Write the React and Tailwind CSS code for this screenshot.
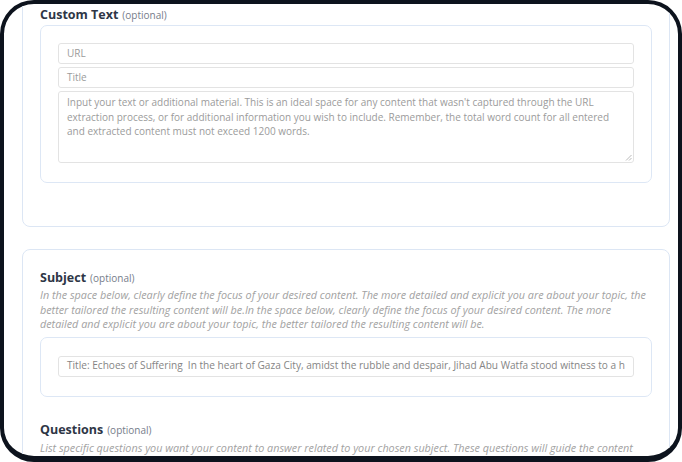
import React from "react";

const font = { fontFamily: '"Open Sans", "Noto Sans", Arial, sans-serif' };

function Heading({ title }) {
  return (
    <div className="flex items-baseline gap-[4px] leading-[16px]">
      <span className="text-[12.5px] font-bold text-[#2e3646]">{title}</span>
      <span className="text-[10px] text-[#767d8a]">(optional)</span>
    </div>
  );
}

function Field({ children, className = "" }) {
  return (
    <div
      className={
        "rounded-[3px] border border-[#e3e3e3] bg-white px-[8px] text-[#9b9b9b] " +
        className
      }
    >
      {children}
    </div>
  );
}

export default function App() {
  return (
    <div className="w-[682px] h-[462px] bg-white" style={font}>
      <div className="w-[682px] h-[462px] rounded-[34px] border-[4px] border-b-[6px] border-[#0d131d] bg-white overflow-hidden">
        <div className="pl-[18px] pr-[8px] -mt-[30px] flex flex-col gap-[22px]">
          {/* Custom Text card */}
          <div className="rounded-[8px] border border-[#dce6f4] px-[17px] pt-[32px] pb-[43px]">
            <Heading title="Custom Text" />
            <div className="mt-[2px] rounded-[7px] border border-[#dde7f5] px-[17px] pt-[17px] pb-[19px] flex flex-col gap-[3px]">
              <Field className="h-[21px] flex items-center text-[10px]">URL</Field>
              <Field className="h-[21px] flex items-center text-[10px]">Title</Field>
              <Field className="relative h-[72px] pt-[3px] text-[10px] leading-[14.5px] whitespace-nowrap">
                Input your text or additional material. This is an ideal space for any content that wasn't captured through the URL
                <br />
                extraction process, or for additional information you wish to include. Remember, the total word count for all entered
                <br />
                and extracted content must not exceed 1200 words.
                <svg
                  className="absolute right-[1px] bottom-[1px]"
                  width="7"
                  height="7"
                  viewBox="0 0 7 7"
                >
                  <path d="M6.5 1 L1 6.5 M6.5 4 L4 6.5" stroke="#a8a8a8" strokeWidth="0.8" />
                </svg>
              </Field>
            </div>
          </div>

          {/* Subject card */}
          <div className="rounded-[8px] border border-[#dce6f4] px-[17px] pt-[20px] pb-[20px]">
            <Heading title="Subject" />
            <div className="mt-[2px] text-[10.8px] italic leading-[14.5px] text-[#a2a2a2] whitespace-nowrap">
              In the space below, clearly define the focus of your desired content. The more detailed and explicit you are about your topic, the
              <br />
              better tailored the resulting content will be.In the space below, clearly define the focus of your desired content. The more
              <br />
              detailed and explicit you are about your topic, the better tailored the resulting content will be.
            </div>
            <div className="mt-[5px] rounded-[7px] border border-[#dde7f5] px-[17px] pt-[18px] pb-[19px]">
              <Field className="h-[21px] flex items-center overflow-hidden whitespace-pre text-[10.1px] text-[#858585]">
                {"Title: Echoes of Suffering  In the heart of Gaza City, amidst the rubble and despair, Jihad Abu Watfa stood witness to a h"}
              </Field>
            </div>
            <div className="mt-[25px]">
              <Heading title="Questions" />
              <div className="mt-[3px] text-[10.8px] italic leading-[14.5px] text-[#a2a2a2] whitespace-nowrap">
                List specific questions you want your content to answer related to your chosen subject. These questions will guide the content
              </div>
            </div>
          </div>
        </div>
      </div>
    </div>
  );
}
